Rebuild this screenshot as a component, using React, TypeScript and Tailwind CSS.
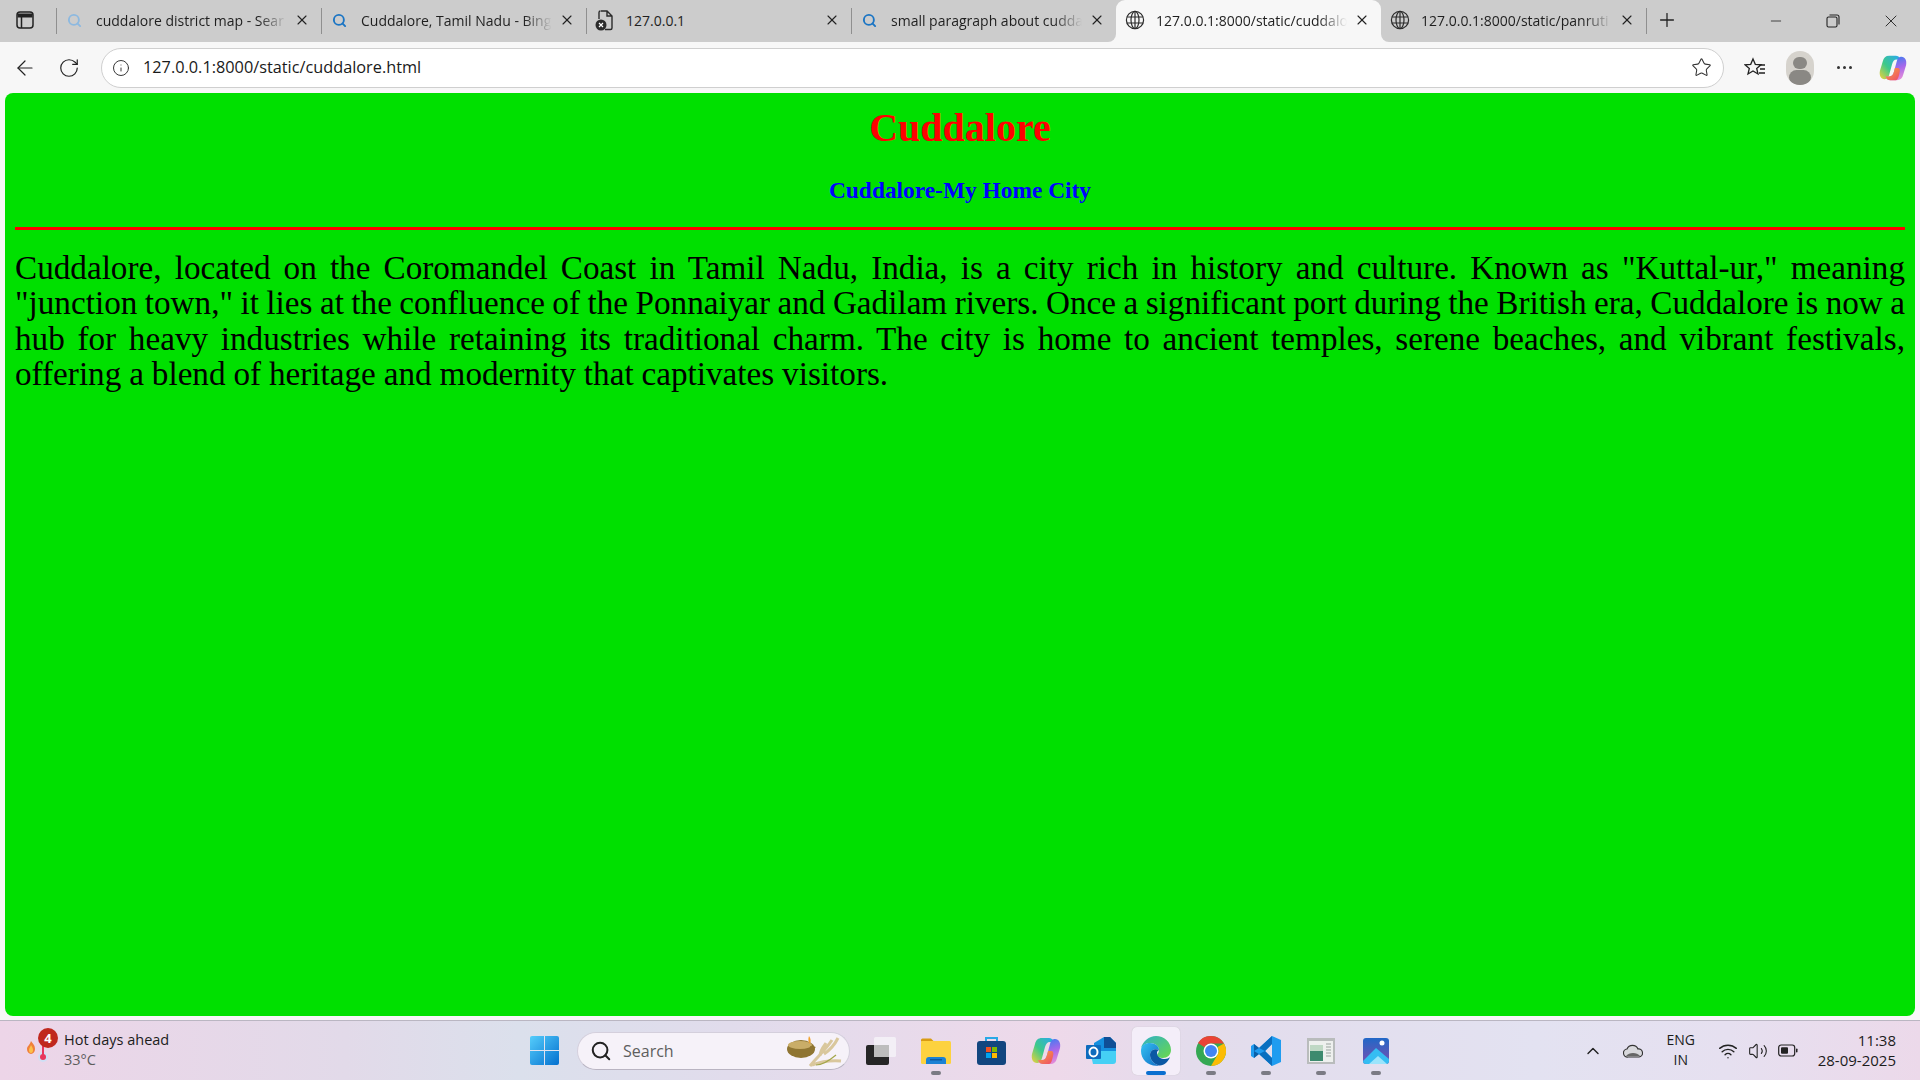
import { ArrowLeft, RotateCw, Info, Star, Search, X, Plus, Minus, ChevronUp, Wifi, Volume2 } from 'lucide-react';

const uiFont = "font-['Open_Sans','Noto_Sans',sans-serif]";

function SearchTabIcon({ faded }: { faded?: boolean }) {
  return <Search size={15} strokeWidth={3} className={faded ? 'text-[#8db9e0]' : 'text-[#1b75c4]'} />;
}

function GlobeIcon() {
  return (
    <svg width="20" height="20" viewBox="0 0 20 20" fill="none" stroke="#2b2b2b" strokeWidth="1.2">
      <circle cx="10" cy="10" r="8.6" />
      <ellipse cx="10" cy="10" rx="4" ry="8.6" />
      <path d="M1.8 7h16.4M1.8 13h16.4M10 1.4v17.2" />
    </svg>
  );
}

function FileErrorIcon() {
  return (
    <svg width="20" height="22" viewBox="0 0 20 22" fill="none">
      <path d="M6 2h6l5 5v12a1.5 1.5 0 0 1-1.5 1.5H10M4 10V3.500A1.500 1.500 0 0 1 5.500 2M12 2v5h5" stroke="#2b2b2b" strokeWidth="1.4" />
      <circle cx="6" cy="16" r="5.500" fill="#2b2b2b" />
      <path d="M4 14l4 4M8 14l-4 4" stroke="#fff" strokeWidth="1.2" />
    </svg>
  );
}

function SidebarIcon() {
  return (
    <svg width="18" height="18" viewBox="0 0 18 18" fill="none" stroke="#222" strokeWidth="1.500">
      <rect x="1" y="1" width="16" height="16" rx="3" />
      <path d="M1.500 4.500h15" strokeWidth="4" />
      <path d="M5.500 5v12" />
    </svg>
  );
}

function Tab({ icon, title, active, fade }: { icon: React.ReactNode; title: string; active?: boolean; fade?: boolean }) {
  return (
    <div className={`relative flex w-[265px] h-[42px] pb-[2px] shrink-0 items-center ${active ? 'bg-[#f7f7f7] rounded-t-[9px]' : ''}`}>
      {active && (
        <>
          <span className="absolute bottom-0 -left-[8px] w-[8px] h-[8px] bg-[#f7f7f7]">
            <span className="block w-full h-full bg-[#cccccc] rounded-br-[8px]" />
          </span>
          <span className="absolute bottom-0 -right-[8px] w-[8px] h-[8px] bg-[#f7f7f7]">
            <span className="block w-full h-full bg-[#cccccc] rounded-bl-[8px]" />
          </span>
        </>
      )}
      <div className="w-[37px] flex justify-center shrink-0">{icon}</div>
      <div className={`w-[191px] ml-[3px] whitespace-nowrap text-[14px] text-[#1f1f1f] ${fade ? '[mask-image:linear-gradient(to_right,black_85%,transparent)]' : ''}`}>
        {title}
      </div>
      <div className="w-[30px] flex justify-center shrink-0">
        <X size={16} strokeWidth={1.7} className="text-[#222]" />
      </div>
    </div>
  );
}

function Sep() {
  return <span className="w-px h-[26px] bg-[#8f8f8f] shrink-0 -mr-px z-10" />;
}

function TabStrip() {
  return (
    <div className="flex items-center h-[42px] bg-[#cccccc] shrink-0">
      <div className="w-[56px] flex justify-center pb-[2px] pr-[7px] shrink-0">
        <SidebarIcon />
      </div>
      <Sep />
      <Tab icon={<SearchTabIcon faded />} title="cuddalore district map - Sear" fade />
      <Sep />
      <Tab icon={<SearchTabIcon />} title="Cuddalore, Tamil Nadu - Bing" fade />
      <Sep />
      <Tab icon={<FileErrorIcon />} title="127.0.0.1" />
      <Sep />
      <Tab icon={<SearchTabIcon />} title="small paragraph about cudda" fade />
      <Tab active icon={<GlobeIcon />} title="127.0.0.1:8000/static/cuddalo" fade />
      <Tab icon={<GlobeIcon />} title="127.0.0.1:8000/static/panruti" fade />
      <Sep />
      <div className="w-[42px] flex justify-center pb-[2px] shrink-0">
        <Plus size={22} strokeWidth={1.4} className="text-[#222]" />
      </div>
      <div className="ml-auto flex items-center">
        <div className="w-[58px] flex justify-center pl-[2px]"><Minus size={16} strokeWidth={1.2} className="text-[#222]" /></div>
        <div className="w-[58px] flex justify-center">
          <svg width="14" height="14" viewBox="0 0 14 14" fill="none" stroke="#222" strokeWidth="1.100">
            <rect x="1" y="3" width="10" height="10" rx="1.500" />
            <path d="M3.500 1h7.500a2 2 0 0 1 2 2v7.500" />
          </svg>
        </div>
        <div className="w-[58px] flex justify-center"><X size={20} strokeWidth={1.1} className="text-[#222]" /></div>
      </div>
    </div>
  );
}

function CopilotIcon({ size }: { size: number }) {
  return (
    <svg width={size} height={size} viewBox="0 0 30 30" fill="none">
      <defs>
        <linearGradient id="copA" x1="1" y1="0" x2="0" y2="1">
          <stop offset="0" stopColor="#2aa8f0" />
          <stop offset="0.55" stopColor="#3cc98a" />
          <stop offset="1" stopColor="#f0d23a" />
        </linearGradient>
        <linearGradient id="copB" x1="0.4" y1="0" x2="0.7" y2="1">
          <stop offset="0" stopColor="#3b7df0" />
          <stop offset="0.5" stopColor="#a868ea" />
          <stop offset="1" stopColor="#e890d8" />
        </linearGradient>
        <linearGradient id="copC" x1="0" y1="0" x2="1" y2="1">
          <stop offset="0" stopColor="#f7a93c" />
          <stop offset="1" stopColor="#ee4a6a" />
        </linearGradient>
      </defs>
      <path d="M11 2C7 2 5 4 4 8L1 18C0 23 2 27 6 27C8 27 10 26 11 22L14 11C15 8 16 6 19 6H23C22 3 20 2 18 2Z" fill="url(#copA)" />
      <path d="M24 3C22 3 20 4 19 8L16 19C15 22 14 24 11 24H7C8 27 10 28 12 28H19C23 28 25 26 26 22L29 12C30 7 28 3 24 3Z" fill="url(#copB)" />
      <path d="M7 24H11C14 24 15 22 16 19L17 15H20C22 15 23 17 22 20C21 25 20 28 18 28H12C10 28 8 27 7 24Z" fill="url(#copC)" />
    </svg>
  );
}

function Toolbar() {
  return (
    <div className="flex items-center h-[51px] shrink-0 bg-[#f7f7f7]">
      <div className="w-[49px] flex justify-center"><ArrowLeft size={24} strokeWidth={1.2} className="text-[#222]" /></div>
      <div className="w-[40px] flex justify-center"><RotateCw size={22} strokeWidth={1.3} className="text-[#222]" /></div>
      <div className="ml-[12px] w-[1623px] h-[40px] rounded-full bg-white border border-[#cfcfcf] flex items-center">
        <div className="w-[37px] mr-[4px] flex justify-center"><Info size={18} strokeWidth={1.3} className="text-[#333]" /></div>
        <div className="text-[16.300px] text-[#1a1a1a] whitespace-nowrap">127.0.0.1:8000/static/cuddalore.html</div>
        <div className="ml-auto mr-[11px]"><Star size={21} strokeWidth={1.2} className="text-[#333]" /></div>
      </div>
      <div className="ml-[18px] w-[26px] flex justify-center">
        <svg width="22" height="22" viewBox="0 0 22 22" fill="none" stroke="#222" strokeWidth="1.300">
          <path d="M9 2l2.300 5.300 5.700.5-4.300 3.700 1.300 5.500L9 14l-5 3 1.300-5.500L1 7.800l5.700-.5z" />
          <path d="M15 8h6M16 12h5M15 16h6" />
        </svg>
      </div>
      <div className="ml-[18px] w-[28px] h-[34px] rounded-full bg-[#d6d3cd] overflow-hidden flex flex-col items-center">
        <span className="mt-[6px] w-[14px] h-[14px] rounded-full bg-[#8a8884]" />
        <span className="mt-[1px] w-[22px] h-[16px] rounded-full bg-[#8a8884]" />
      </div>
      <div className="ml-[16px] w-[28px] flex justify-center gap-[3px]">
        <span className="w-[3px] h-[3px] rounded-full bg-[#333]" />
        <span className="w-[3px] h-[3px] rounded-full bg-[#333]" />
        <span className="w-[3px] h-[3px] rounded-full bg-[#333]" />
      </div>
      <div className="ml-[21px]"><CopilotIcon size={28} /></div>
    </div>
  );
}

function Page() {
  return (
    <div className="mx-[5px] h-[923px] shrink-0 rounded-[8px] bg-[#00e000] px-[10px] text-black">
      <h1 className="pt-[12px] text-center text-[40px] leading-[46px] font-bold text-[#ff0000] font-['Liberation_Serif',serif]">Cuddalore</h1>
      <h3 className="mt-[26px] text-center text-[23.400px] leading-[27px] font-bold text-[#0000ff] font-['Liberation_Serif',serif]">Cuddalore-My Home City</h3>
      <hr className="mt-[23px] h-[3px] border-0 bg-[#ff0000]" />
      <p className="mt-[20px] text-justify text-[33.200px] leading-[35.300px] [word-spacing:-1px] font-['Liberation_Serif',serif]">
        Cuddalore, located on the Coromandel Coast in Tamil Nadu, India, is a city rich in history and culture. Known as "Kuttal-ur," meaning "junction town," it lies at the confluence of the Ponnaiyar and Gadilam rivers. Once a significant port during the British era, Cuddalore is now a hub for heavy industries while retaining its traditional charm. The city is home to ancient temples, serene beaches, and vibrant festivals, <span className="[word-spacing:-0.4px]">offering a blend of heritage and modernity that captivates visitors.</span>
      </p>
    </div>
  );
}

function Weather() {
  return (
    <div className="w-[530px] shrink-0 flex items-center">
      <div className="relative w-[64px] h-[59px] shrink-0">
        <svg className="absolute left-[25px] top-[13px]" width="26" height="30" viewBox="0 0 26 30" fill="none">
          <path d="M6 7c2 3 4 4 4 8a4 5 0 0 1-8 0c0-3 3-4 4-8z" fill="#f0803a" />
          <path d="M6 11c1 2 2 3 2 5a2 3 0 0 1-4 0c0-2 1.500-3 2-5z" fill="#fbc14a" />
          <circle cx="18" cy="23" r="5" fill="#cfe0f5" />
          <path d="M18 6v16" stroke="#e8365d" strokeWidth="2" />
          <circle cx="18" cy="23" r="3" fill="#e8365d" />
        </svg>
        <span className="absolute left-[38px] top-[7px] w-[20px] h-[20px] rounded-full bg-[#c0281e] text-white text-[13px] font-bold leading-[20px] text-center">4</span>
      </div>
      <div className="flex flex-col text-[14.500px] leading-[20px] -mt-[1px]">
        <span className="text-[#1c1c1c]">Hot days ahead</span>
        <span className="text-[#5c5c5c]">33°C</span>
      </div>
    </div>
  );
}

function WindowsLogo() {
  return (
    <svg width="29" height="29" viewBox="0 0 29 29" className="shrink-0">
      <defs>
        <linearGradient id="winG" x1="0" y1="0" x2="1" y2="1">
          <stop offset="0" stopColor="#55cdfb" />
          <stop offset="1" stopColor="#0470cf" />
        </linearGradient>
      </defs>
      <rect width="29" height="29" rx="2" fill="url(#winG)" />
      <path d="M14.500 0v29M0 14.500h29" stroke="#e3e3ef" strokeWidth="1" />
    </svg>
  );
}

function SearchBox() {
  return (
    <div className="ml-[18px] w-[273px] h-[38px] shrink-0 rounded-full bg-[#f6f2f9] border border-[#d4cfdc] border-b-[#b9b4c2] flex items-center relative">
      <Search size={22} strokeWidth={2.200} className="ml-[12px] text-[#222]" />
      <span className="ml-[11px] text-[16px] text-[#5e5e5e]">Search</span>
      <svg className="ml-auto mr-[7px]" width="56" height="34" viewBox="0 0 56 34" fill="none">
        <path d="M24 32C30 24 38 18 46 6M26 31C34 28 44 26 55 27M34 22c0-6 4-10 6-13M38 20c6-4 10-8 14-16" stroke="#d9c79c" strokeWidth="3" />
        <path d="M30 31c6 0 14-5 20-10" stroke="#a3a64a" strokeWidth="1.200" />
        <ellipse cx="15" cy="15" rx="14" ry="9" fill="#8f7532" />
        <ellipse cx="14" cy="11" rx="12" ry="4" fill="#c9ad68" />
        <path d="M24 12l6 1-5 4z" fill="#8f7532" />
        <path d="M23 2c2 3 2 5 1 8-2-2-2-5-1-8z" fill="#f2a22c" />
      </svg>
    </div>
  );
}

function Slot({ children, running, active }: { children: React.ReactNode; running?: boolean; active?: boolean }) {
  return (
    <div className={`relative w-[48px] h-[48px] mx-[3.500px] shrink-0 rounded-[5px] flex items-center justify-center ${active ? 'bg-[#f4eef9] shadow-[0_0_1px_#bbb]' : ''}`}>
      {children}
      {running && <span className="absolute left-[19px] bottom-[0px] w-[10px] h-[4px] rounded-full bg-[#7b7b84]" />}
      {active && <span className="absolute left-[14px] bottom-[0px] w-[20px] h-[4px] rounded-full bg-[#0a6fd0]" />}
    </div>
  );
}

function TaskIcons() {
  return (
    <div className="ml-[3.500px] flex items-center h-[59px]">
      <Slot>
        <svg width="30" height="28" viewBox="0 0 30 28">
          <rect y="8" width="23" height="20" rx="2" fill="#262626" />
          <rect x="8" width="22" height="20" rx="1.500" fill="#f4f1f7" opacity="0.9" />
          <rect x="8" y="8" width="15" height="12" fill="#bdbdbd" />
        </svg>
      </Slot>
      <Slot running>
        <svg width="30" height="26" viewBox="0 0 30 26">
          <path d="M0 2a1.500 1.500 0 0 1 1.500-1.500H10l3 3H0z" fill="#d99c13" />
          <rect y="3" width="30" height="23" rx="1.500" fill="#fdd23f" />
          <path d="M5 26v-4a3 3 0 0 1 3-3h14a3 3 0 0 1 3 3v4z" fill="#1c82d4" />
          <rect x="9" y="21" width="12" height="1.500" fill="#0f5aa0" />
        </svg>
      </Slot>
      <Slot>
        <svg width="29" height="29" viewBox="0 0 29 29" fill="none">
          <path d="M9 6V2h11v4" stroke="#29a8e6" strokeWidth="2" />
          <rect y="5" width="29" height="24" rx="3" fill="#12467f" />
          <rect x="9" y="11" width="5" height="5" fill="#f25022" />
          <rect x="15" y="11" width="5" height="5" fill="#7fba00" />
          <rect x="9" y="17" width="5" height="5" fill="#00a4ef" />
          <rect x="15" y="17" width="5" height="5" fill="#ffb900" />
        </svg>
      </Slot>
      <Slot><CopilotIcon size={30} /></Slot>
      <Slot>
        <svg width="30" height="28" viewBox="0 0 30 28">
          <path d="M8 6l10-6h6l6 6v14a3 3 0 0 1-3 3H8z" fill="#1490df" />
          <path d="M18 0h6l6 6v5h-12z" fill="#0f4f96" />
          <path d="M4 14h26v10a3 3 0 0 1-3 3H7z" fill="#45d0f5" />
          <rect y="8" width="15" height="14" rx="1" fill="#0f6cbd" />
          <ellipse cx="7.500" cy="15" rx="4" ry="4.500" fill="none" stroke="#fff" strokeWidth="2" />
        </svg>
      </Slot>
      <Slot active>
        <svg width="30" height="30" viewBox="0 0 30 30">
          <defs>
            <linearGradient id="edgeA" x1="0" y1="0" x2="1" y2="1">
              <stop offset="0" stopColor="#35c1f1" />
              <stop offset="1" stopColor="#1170c8" />
            </linearGradient>
            <linearGradient id="edgeB" x1="0" y1="0" x2="1" y2="1">
              <stop offset="0" stopColor="#2fb0c9" />
              <stop offset="1" stopColor="#6ad94a" />
            </linearGradient>
          </defs>
          <path d="M15 0c8 0 15 6 15 14 0 5-4 8-8 8-3 0-6-1-6-3 0-1 2-2 2-5 0-4-4-7-9-7-4 0-7 2-9 5C2 5 8 0 15 0z" fill="url(#edgeB)" />
          <path d="M0 15C0 9 4 7 9 7c5 0 9 3 9 7-4-2-9 0-9 5 0 5 4 9 9 10.500C8 31 0 24 0 15z" fill="url(#edgeA)" />
          <path d="M18 29.500c-5-1.500-9-5.500-9-10.500 0-5 5-7 9-5-2 1-2 2-2 3 0 4 4 6 8 6 2 0 4-1 5-2-2 5-6 9-11 8.500z" fill="#0c59a4" />
        </svg>
      </Slot>
      <Slot running>
        <svg width="30" height="30" viewBox="0 0 30 30">
          <circle cx="15" cy="15" r="15" fill="#34a853" />
          <path d="M15 0a15 15 0 0 1 13 7.500H15a7.500 7.500 0 0 0-6.500 3.750L2 7A15 15 0 0 1 15 0z" fill="#ea4335" />
          <path d="M28 7.500A15 15 0 0 1 15 30l6.500-11.250A7.500 7.500 0 0 0 21.500 11z" fill="#fbbc05" />
          <circle cx="15" cy="15" r="7.500" fill="#fff" />
          <circle cx="15" cy="15" r="6" fill="#4285f4" />
        </svg>
      </Slot>
      <Slot running>
        <svg width="30" height="30" viewBox="0 0 30 30">
          <path d="M21 0l9 4v22l-9 4-13-12-5 4-3-2V10l3-2 5 4zM21 8l-7 7 7 7z" fill="#1f9cf0" fillRule="evenodd" />
          <path d="M21 0v8l-7 7-6-3zM8 18l6-3 7 7v8z" fill="#0a6fbf" />
          <path d="M3 8l5 4-5 3zM3 22l5-4-5-3z" fill="#0a5fa8" />
        </svg>
      </Slot>
      <Slot running>
        <svg width="28" height="26" viewBox="0 0 28 26">
          <rect width="28" height="26" fill="#b9bcbc" />
          <rect x="2" y="3" width="24" height="21" fill="#eef0ee" />
          <rect x="3" y="7" width="13" height="16" fill="#3d8a6e" />
          <rect x="3" y="7" width="13" height="6" fill="#bfd8c4" />
          <path d="M19 6h5M19 9h5M19 12h5M19 15h5M19 18h5" stroke="#9aa39e" />
        </svg>
      </Slot>
      <Slot running>
        <svg width="26" height="26" viewBox="0 0 26 26">
          <defs>
            <linearGradient id="phoA" x1="0" y1="0" x2="0" y2="1">
              <stop offset="0" stopColor="#2168c7" />
              <stop offset="1" stopColor="#7a4fb0" />
            </linearGradient>
          </defs>
          <rect width="26" height="26" rx="3" fill="url(#phoA)" />
          <path d="M0 23l13-13 13 11v2a3 3 0 0 1-3 3H3a3 3 0 0 1-3-3z" fill="#35bdf2" />
          <path d="M6 26l9-8 9 8z" fill="#9be4fb" />
          <circle cx="19" cy="5" r="2.500" fill="#fff" />
        </svg>
      </Slot>
    </div>
  );
}

function Tray() {
  return (
    <div className="ml-auto flex items-center h-[59px] pr-[24px] text-[#1c1c1c]">
      <ChevronUp size={20} strokeWidth={1.700} className="text-[#222]" />
      <svg className="ml-[20px]" width="20" height="14" viewBox="0 0 20 14">
        <path d="M5 13a4 4 0 0 1-1-8 6 6 0 0 1 11 0 4 4 0 0 1 1 8z" fill="#d8d8dc" stroke="#333" strokeWidth="1.200" />
        <path d="M3 12c3-4 11-4 14 0z" fill="#666" />
      </svg>
      <div className="ml-[10px] w-[56px] flex flex-col items-center text-[14px] leading-[20px] -mt-[1px]">
        <span>ENG</span>
        <span>IN</span>
      </div>
      <Wifi size={20} strokeWidth={1.700} className="ml-[9px] text-[#222]" />
      <Volume2 size={20} strokeWidth={1.300} className="ml-[10px] text-[#222]" />
      <svg className="ml-[10px]" width="20" height="13" viewBox="0 0 20 13" fill="none">
        <rect x="0.700" y="1" width="16" height="11" rx="2.500" stroke="#222" strokeWidth="1.200" />
        <rect x="3" y="3.200" width="7" height="6.600" rx="1" fill="#222" />
        <rect x="18" y="4.500" width="1.500" height="4" rx="0.700" fill="#222" />
      </svg>
      <div className="ml-[20px] flex flex-col items-end text-[15px] leading-[20px] -mt-[1px]">
        <span>11:38</span>
        <span>28-09-2025</span>
      </div>
    </div>
  );
}

function Taskbar() {
  return (
    <div className="mt-[4px] h-[60px] flex items-center border-t border-[#bab6c2] bg-[linear-gradient(90deg,#edd5e8_0%,#e2dae9_18%,#dbe0ec_27%,#e1dcec_38%,#eed9ea_55%,#e3dcec_62%,#e3e2f1_80%,#e6e0f0_90%,#ecd9ea_100%)]">
      <Weather />
      <WindowsLogo />
      <SearchBox />
      <TaskIcons />
      <Tray />
    </div>
  );
}

export default function App() {
  return (
    <div className={`w-[1920px] h-[1080px] flex flex-col overflow-hidden bg-[#f7f7f7] ${uiFont}`}>
      <TabStrip />
      <Toolbar />
      <Page />
      <Taskbar />
    </div>
  );
}
